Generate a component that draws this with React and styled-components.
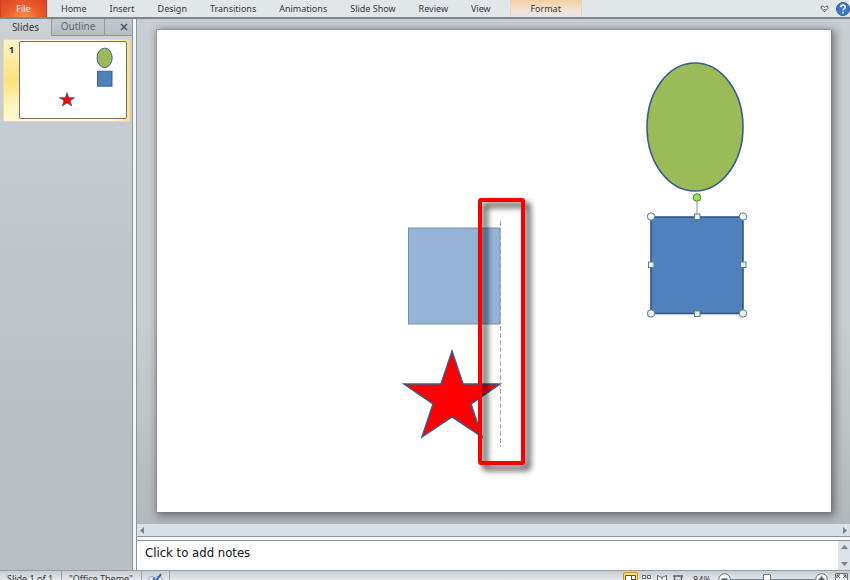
import React from "react";
import styled, { createGlobalStyle } from "styled-components";

const Global = createGlobalStyle`
  *, *::before, *::after { box-sizing: border-box; }
  body { margin: 0; overflow: hidden; }
  button, input, textarea { font: inherit; color: inherit; margin: 0; }
  button { border: 0; padding: 0; background: none; }
`;

const Window = styled.div`
  display: grid;
  grid-template-rows: 19px minmax(0, 1fr) 10px;
  height: 100vh;
  overflow: hidden;
  background: #e2e6ea;
  color: #36393d;
  font-family: "Noto Sans", "Open Sans", sans-serif;
  font-size: 9px;
  line-height: 12px;
`;

const Ribbon = styled.header`
  display: flex;
  align-items: stretch;
  background: #e1e6e9;
  border-bottom: 2px solid #7b858b;
`;

const FileTab = styled.button`
  width: 47px;
  color: #fff;
  border: 1px solid #c8431c;
  border-width: 0 1px;
  background: radial-gradient(ellipse at 50% 110%, #fa9a4e 0%, #ea5a2b 55%, #dc4524 100%);
`;

const RibbonTabs = styled.nav`
  display: flex;
  gap: 23px;
  padding-left: 14px;
`;

const RibbonTab = styled.button`
  white-space: nowrap;
`;

const ContextTab = styled.button`
  width: 72px;
  margin-left: 19px;
  border: 1px solid #ecd2b4;
  border-width: 0 1px;
  background: linear-gradient(#f5cfa0, #efe3d6 60%, #e4e6e7);
`;

const RibbonTools = styled.div`
  display: flex;
  align-items: center;
  gap: 7px;
  margin-left: auto;
  svg { display: block; }
`;

const Workspace = styled.main`
  display: grid;
  grid-template-columns: 133px minmax(0, 1fr);
  gap: 3px;
  background: #f4f6f8;
`;

const SidePanel = styled.aside`
  border-right: 1px solid #8f979d;
  background: linear-gradient(#ccd1d6, #b8bec1 75%);
`;

const PanelTabs = styled.div`
  display: grid;
  grid-template-columns: 51px 53px 1fr;
  height: 17px;
  font-size: 10px;
`;

const PanelTab = styled.button`
  padding-bottom: 2px;
  background: ${(p) => (p.$active ? "transparent" : "linear-gradient(#c3c9cf, #b5bcc3)")};
  color: ${(p) => (p.$active ? "#36393d" : "#60676e")};
  border: solid #929aa1;
  border-width: ${(p) => (p.$active ? "0" : "0 0 1px 1px")};
`;

const PanelClose = styled(PanelTab)`
  display: flex;
  align-items: center;
  justify-content: center;
  padding: 0 0 0 10px;
`;

const Thumbnail = styled.div`
  display: grid;
  grid-template-columns: 15px 1fr;
  margin: 3px 2px 0 3px;
  padding: 1px 2px 2px 0;
  border: 1px solid #f1dc82;
  border-radius: 2px;
  background: linear-gradient(90deg, transparent 85%, #fbe58c), linear-gradient(#fff6c9, #ffe07c 50%, #fff3b4 75%, #fffbd9);
`;

const ThumbNumber = styled.span`
  padding: 3px 0 0 5px;
  font-weight: 700;
  color: #222;
`;

const ThumbSlide = styled.div`
  border: 1px solid #6d7074;
  border-radius: 2px;
  background: #fff;
  overflow: hidden;
  svg { display: block; width: 100%; height: auto; }
`;

const Editor = styled.section`
  display: grid;
  grid-template-rows: minmax(0, 1fr) 13px 33px;
  border-left: 1px solid #8f979d;
`;

const Canvas = styled.div`
  padding: 11px 19px 0 20px;
  overflow: hidden;
  background: linear-gradient(#c9ced2, #c9ced2 60%, #b3b8ba);
`;

const Slide = styled.div`
  background: #fff;
  box-shadow: 0 0 2px #707579, 2px 2px 8px 2px rgba(60, 66, 70, 0.6);
  svg { display: block; width: 100%; height: auto; }
`;

const HorizontalScroll = styled.div`
  display: flex;
  justify-content: space-between;
  align-items: center;
  padding: 0 2px;
  border-bottom: 1px solid #8f979d;
  background: #d9e0e7;
`;

const ScrollButton = styled.button`
  display: flex;
  align-items: center;
  justify-content: center;
`;

const NotesPane = styled.div`
  display: grid;
  grid-template-columns: minmax(0, 1fr) 12px;
  flex: 1;
  border-top: 1px solid #8f979d;
  background: #fff;
`;

const EditorBottom = styled.div`
  display: flex;
  flex-direction: column;
  padding-top: 3px;
`;

const Notes = styled.textarea`
  border: 0;
  outline: 0;
  resize: none;
  overflow: hidden;
  height: 29px;
  padding: 2px 8px;
  background: #fff;
  color: #111;
  font-family: "DejaVu Sans Condensed", "Noto Sans", sans-serif;
  font-size: 13px;
  line-height: 20px;
  &::placeholder { color: #111; opacity: 1; }
`;

const VerticalScroll = styled.div`
  display: flex;
  flex-direction: column;
  justify-content: space-between;
  padding: 3px 0;
  background: #dce2e8;
`;

const StatusClip = styled.footer`
  overflow: hidden;
  border-top: 1px solid #959da3;
  background: linear-gradient(#c7cdd2, #e3e7ea);
`;

const StatusBar = styled.div`
  display: flex;
  align-items: center;
  height: 17px;
`;

const StatusItem = styled.span`
  height: 17px;
  line-height: 16px;
  padding: 0 8px 0 7px;
  border-right: 1px solid #9ba3aa;
  white-space: nowrap;
`;

const SpellButton = styled.button`
  display: flex;
  align-items: center;
  justify-content: center;
  width: 28px;
  height: 17px;
  border-right: 1px solid #9ba3aa;
`;

const StatusTools = styled.div`
  display: flex;
  align-items: center;
  height: 17px;
  margin-left: auto;
  padding-right: 2px;
`;

const ViewButton = styled.button`
  display: flex;
  align-items: center;
  justify-content: center;
  width: ${(p) => (p.$active ? "15px" : "16px")};
  height: 15px;
  border: ${(p) => (p.$active ? "1px solid #c7932a" : "0")};
  border-radius: 2px;
  background: ${(p) => (p.$active ? "#ffdc70" : "transparent")};
`;

const ZoomValue = styled.button`
  width: 32px;
`;

const IconButton = styled.button`
  display: flex;
`;

const ZoomRange = styled.input`
  appearance: none;
  width: 84px;
  height: 15px;
  background: linear-gradient(#7d858c, #7d858c) center / 100% 1px no-repeat;
  &::-webkit-slider-thumb {
    appearance: none;
    width: 8px;
    height: 12px;
    border: 1px solid #6e767d;
    border-radius: 1px 1px 4px 4px;
    background: #fff;
  }
`;

const FitButton = styled(IconButton)`
  margin-left: 7px;
`;

const STAR =
  "295,321 306,354 343,354 314,374 325,407 295,387 265,407 276,374 247,354 284,354";

function Arrow({ points, label }) {
  return (
    <ScrollButton aria-label={label}>
      <svg width="7" height="7" viewBox="0 0 7 7"><polygon points={points} fill="#77818a" /></svg>
    </ScrollButton>
  );
}

function SlideArt() {
  const corners = [[494, 187], [586, 187], [494, 284], [586, 284]];
  const sides = [[540, 187], [494, 235], [586, 235], [540, 284]];
  return (
    <svg viewBox="0 0 674 482" role="img" aria-label="Slide with an ellipse, a selected square and a star">
      <defs>
        <filter id="frameShadow" x="-50%" y="-10%" width="220%" height="125%">
          <feDropShadow dx="5" dy="5" stdDeviation="3" floodColor="#000" floodOpacity="0.85" />
        </filter>
      </defs>
      <ellipse cx="538" cy="97" rx="48" ry="64" fill="#9bbb59" stroke="#385d8a" strokeWidth="1.6" />
      <rect x="494" y="187" width="92" height="96.5" fill="#4f81bd" stroke="#2f5684" strokeWidth="1.6" />
      <path d="M540 171V184" stroke="#8593a4" />
      <circle cx="540" cy="167.5" r="3.8" fill="#92e34c" stroke="#568a35" />
      {corners.map(([x, y]) => (
        <circle key={`${x}-${y}`} cx={x} cy={y - 0.5} r="3.7" fill="#eefafe" stroke="#64798a" />
      ))}
      {sides.map(([x, y]) => (
        <rect key={`${x}-${y}`} x={x - 2.5} y={y - 3} width="5.5" height="5.5" fill="#e4f8fd" stroke="#64798a" />
      ))}
      <rect x="251.5" y="198" width="91.5" height="96" fill="#95b3d7" stroke="#7590b2" />
      <polygon points={STAR} fill="#f00" stroke="#385d8a" strokeWidth="1.5" />
      <path d="M343.5 191V417" stroke="#aaa" strokeDasharray="5 2" />
      <rect x="323" y="170" width="43" height="263" rx="1" fill="none" stroke="#f90000" strokeWidth="4" filter="url(#frameShadow)" />
    </svg>
  );
}

function ThumbArt() {
  return (
    <svg viewBox="0 0 674 482" aria-hidden="true">
      <ellipse cx="538" cy="101" rx="48" ry="62" fill="#9bbb59" stroke="#385d8a" strokeWidth="6" />
      <rect x="493" y="186" width="92" height="95" fill="#4f81bd" stroke="#385d8a" strokeWidth="6" />
      <polygon points={STAR} transform="translate(4 0)" fill="#f00" stroke="#385d8a" strokeWidth="5" />
    </svg>
  );
}

const tabs = ["Home", "Insert", "Design", "Transitions", "Animations", "Slide Show", "Review", "View"];

export default function App() {
  return (
    <>
      <Global />
      <Window>
        <Ribbon>
          <FileTab>File</FileTab>
          <RibbonTabs>{tabs.map((t) => <RibbonTab key={t}>{t}</RibbonTab>)}</RibbonTabs>
          <ContextTab>Format</ContextTab>
          <RibbonTools>
            <IconButton aria-label="Collapse ribbon">
              <svg width="9" height="8" viewBox="0 0 9 8">
                <path d="M1.2 1.2H3L4.5 2.7L6 1.2H7.8V3.5L4.5 6.8L1.2 3.5Z" fill="#fff" stroke="#555c62" />
                <path d="M3 3.5L4.5 5L6 3.5" fill="none" stroke="#777e84" />
              </svg>
            </IconButton>
            <IconButton aria-label="Help">
              <svg width="14" height="14" viewBox="0 0 14 14">
                <circle cx="7" cy="7" r="6.5" fill="#3e74cf" stroke="#315eae" />
                <path d="M4.8 5.2C4.8 2.4 9.3 2.4 9.3 5C9.3 6.7 7 6.6 7 8.6M7 9.8V11.4" fill="none" stroke="#fff" strokeWidth="1.6" />
              </svg>
            </IconButton>
          </RibbonTools>
        </Ribbon>
        <Workspace>
          <SidePanel>
            <PanelTabs>
              <PanelTab $active>Slides</PanelTab>
              <PanelTab>Outline</PanelTab>
              <PanelClose aria-label="Close panel">
                <svg width="8" height="8" viewBox="0 0 8 8"><path d="M1 1L7 7M7 1L1 7" stroke="#4b5258" strokeWidth="1.5" /></svg>
              </PanelClose>
            </PanelTabs>
            <Thumbnail>
              <ThumbNumber>1</ThumbNumber>
              <ThumbSlide><ThumbArt /></ThumbSlide>
            </Thumbnail>
          </SidePanel>
          <Editor>
            <Canvas><Slide><SlideArt /></Slide></Canvas>
            <HorizontalScroll>
              <Arrow label="Scroll left" points="5,0 5,7 1,3.5" />
              <Arrow label="Scroll right" points="2,0 2,7 6,3.5" />
            </HorizontalScroll>
            <EditorBottom>
              <NotesPane>
                <Notes aria-label="Notes" placeholder="Click to add notes" />
                <VerticalScroll>
                  <Arrow label="Scroll up" points="0,5 7,5 3.5,1" />
                  <Arrow label="Scroll down" points="0,2 7,2 3.5,6" />
                </VerticalScroll>
              </NotesPane>
            </EditorBottom>
          </Editor>
        </Workspace>
        <StatusClip>
          <StatusBar>
            <StatusItem>Slide 1 of 1</StatusItem>
            <StatusItem>"Office Theme"</StatusItem>
            <SpellButton aria-label="Spelling">
              <svg width="15" height="15" viewBox="0 0 15 15">
                <path d="M1 6C3 4 6 4 7 6C9 4 12 4 14 6V13C11 11 9 12 7 13C5 11 3 12 1 13Z" fill="#eef2f6" stroke="#8d9ab0" />
                <path d="M5 6L8 9L13 2" fill="none" stroke="#3566b8" strokeWidth="2" />
              </svg>
            </SpellButton>
            <StatusTools>
              <ViewButton $active aria-label="Normal view">
                <svg width="11" height="10" viewBox="0 0 11 10"><path d="M.5 .5H10.5V9.5H.5ZM6.5 .5V9.5M6.5 4.5H10.5" fill="#fff" stroke="#5c5337" /></svg>
              </ViewButton>
              <ViewButton aria-label="Slide sorter">
                <svg width="9" height="9" viewBox="0 0 9 9"><path d="M.5 .5H3.5V3.5H.5ZM5.5 .5H8.5V3.5H5.5ZM.5 5.5H3.5V8.5H.5ZM5.5 5.5H8.5V8.5H5.5Z" fill="#fff" stroke="#5b6268" /></svg>
              </ViewButton>
              <ViewButton aria-label="Reading view">
                <svg width="10" height="9" viewBox="0 0 10 9"><path d="M.5 .5L5 2.5L9.5 .5V7.5L5 8.5L.5 7.5ZM5 2.5V8.5" fill="#fff" stroke="#5b6268" /></svg>
              </ViewButton>
              <ViewButton aria-label="Slide show">
                <svg width="10" height="9" viewBox="0 0 10 9"><path d="M0 1H10M1.5 1V5.5H8.5V1M5 5.5V8M3 8.5H7" fill="none" stroke="#5b6268" strokeWidth="1.4" /></svg>
              </ViewButton>
              <ZoomValue>84%</ZoomValue>
              <IconButton aria-label="Zoom out">
                <svg width="13" height="13" viewBox="0 0 13 13"><circle cx="6.5" cy="6.5" r="5.8" fill="#f6f8f9" stroke="#656e76" /><path d="M3.5 6.5H9.5" stroke="#50575d" strokeWidth="2" /></svg>
              </IconButton>
              <ZoomRange type="range" aria-label="Zoom" min="0" max="100" defaultValue="42" />
              <IconButton aria-label="Zoom in">
                <svg width="13" height="13" viewBox="0 0 13 13"><circle cx="6.5" cy="6.5" r="5.8" fill="#f6f8f9" stroke="#656e76" /><path d="M3.5 6.5H9.5M6.5 3.5V9.5" stroke="#50575d" strokeWidth="2" /></svg>
              </IconButton>
              <FitButton aria-label="Fit slide to window">
                <svg width="13" height="13" viewBox="0 0 13 13"><path d="M.5 .5H12.5V12.5H.5Z" fill="#f2f4f6" stroke="#6a7279" /><path d="M2 5V2H5M8 2H11V5M11 8V11H8M5 11H2V8M2 2L5 5M11 2L8 5M2 11L5 8M11 11L8 8" fill="none" stroke="#50575d" /></svg>
              </FitButton>
            </StatusTools>
          </StatusBar>
        </StatusClip>
      </Window>
    </>
  );
}
